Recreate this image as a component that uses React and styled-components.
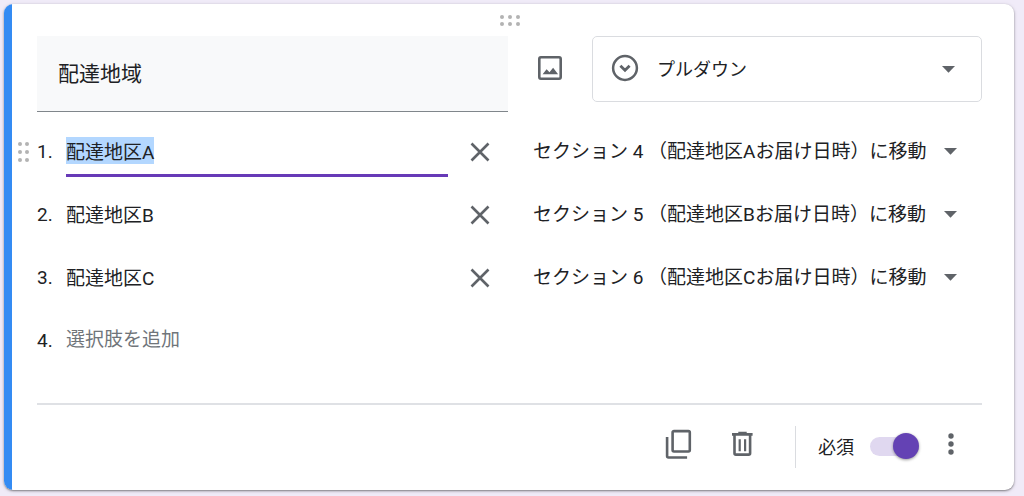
import React, { useEffect, useRef } from "react";
import styled, { createGlobalStyle } from "styled-components";

const GlobalStyle = createGlobalStyle`
  *, *::before, *::after { box-sizing: border-box; }
  body {
    margin: 0;
    background: #f0ebf8;
    color: #202124;
    font-family: Roboto, "Noto Sans CJK JP", sans-serif;
    font-size: 19px;
  }
  button, input, select { font: inherit; color: inherit; }
`;

const Page = styled.main`
  padding: 4px 10px 6px 4px;
`;

const Card = styled.form`
  display: flex;
  overflow: hidden;
  background: #fff;
  border-radius: 9px;
  box-shadow: 0 1px 2px rgba(0, 0, 0, 0.4), 0 1px 4px rgba(0, 0, 0, 0.14);
`;

const Accent = styled.div`
  flex: none;
  width: 8px;
  background: #348bf3;
`;

const Content = styled.div`
  flex: 1;
  min-width: 0;
  padding-right: 32px;
`;

const TopHandle = styled.div`
  display: flex;
  align-items: center;
  justify-content: center;
  height: 32px;
  padding-left: 25px;
`;

const Header = styled.div`
  display: grid;
  grid-template-columns: 471fr 84px 390fr;
  align-items: start;
  padding-left: 25px;
`;

const TitleInput = styled.input`
  width: 100%;
  height: 76px;
  padding: 0 21px 4px;
  border: 0;
  border-bottom: 1px solid #80868b;
  border-radius: 0;
  outline: 0;
  background: #f8f9fa;
  font-size: 21px;
`;

const IconButton = styled.button`
  display: flex;
  align-items: center;
  justify-content: center;
  width: ${(p) => p.$width || 64}px;
  height: ${(p) => p.$height || 48}px;
  padding: 0;
  border: 0;
  background: none;
  color: #5f6368;
`;

const SelectBox = styled.div`
  display: grid;
  align-items: center;
  min-width: 0;
  height: ${(p) => (p.$framed ? 66 : 48)}px;
  border: ${(p) => (p.$framed ? "1px solid #dadce0" : "0")};
  border-radius: 5px;
  color: #5f6368;

  > * { grid-area: 1 / 1; }
  > svg { pointer-events: none; }
`;

const Select = styled.select`
  appearance: none;
  width: 100%;
  height: 100%;
  padding: 0 56px 0 ${(p) => (p.$withIcon ? 64 : 21)}px;
  border: 0;
  outline: 0;
  background: none;
  color: #202124;
  font-size: ${(p) => (p.$withIcon ? 18 : 19)}px;
`;

const LeadIcon = styled.svg`
  margin-left: 16px;
`;

const Caret = styled.svg`
  justify-self: end;
  margin-right: ${(p) => (p.$framed ? 26 : 25)}px;
`;

const Options = styled.ol`
  margin: 8px 0 31px;
  padding: 0;
  list-style: none;
`;

const OptionRow = styled.li`
  display: grid;
  grid-template-columns: 25px 29px 382fr 64px 470fr;
  align-items: center;
  height: 63px;
`;

const RowHandle = styled.span`
  display: flex;
  padding-left: 6px;
`;

const OptionInput = styled.input`
  width: 100%;
  height: 51px;
  padding: ${(p) => (p.$active ? "1px 0 0" : "0 0 2px")};
  border: 0;
  border-bottom: ${(p) => (p.$active ? "3px solid #673ab7" : "0")};
  border-radius: 0;
  outline: 0;
  background: none;

  &::selection { background: #b3d7ff; color: #202124; }
  &::placeholder { color: #70757a; opacity: 1; }
`;

const Footer = styled.footer`
  display: flex;
  align-items: center;
  justify-content: flex-end;
  height: 87px;
  margin-left: 25px;
  padding-bottom: 7px;
  border-top: 2px solid #dfe1e5;
`;

const Separator = styled.span`
  width: 1px;
  height: 42px;
  margin: 6px 22px 0 21px;
  background: #dadce0;
`;

const ToggleLabel = styled.label`
  display: flex;
  align-items: center;
  gap: 16px;
  padding-top: 4px;
  font-size: 18px;
`;

const Toggle = styled.input`
  appearance: none;
  display: grid;
  align-items: center;
  width: 49px;
  height: 26px;
  margin: 0;

  &::before, &::after { content: ""; grid-area: 1 / 1; }
  &::before {
    height: 19px;
    margin-right: 2px;
    border-radius: 10px;
    background: #e0d8f0;
  }
  &::after {
    justify-self: start;
    width: 26px;
    height: 26px;
    border-radius: 50%;
    background: #fff;
    box-shadow: 0 1px 3px rgba(0, 0, 0, 0.4);
  }
  &:checked::after { justify-self: end; background: #6442b4; }
`;

function Dots({ columns, rows, dx, dy }) {
  const dots = [];
  for (let r = 0; r < rows; r++)
    for (let c = 0; c < columns; c++)
      dots.push(<circle key={`${r}-${c}`} cx={2 + c * dx} cy={2 + r * dy} r="2" />);
  const w = 4 + (columns - 1) * dx;
  const h = 4 + (rows - 1) * dy;
  return (
    <svg width={w} height={h} viewBox={`0 0 ${w} ${h}`} fill="#b3b3b3" aria-hidden="true">
      {dots}
    </svg>
  );
}

function DownCaret({ framed }) {
  return (
    <Caret $framed={framed} width="13" height="7" viewBox="0 0 13 7" aria-hidden="true">
      <path d="M0 0h13L6.5 6.7z" fill="currentColor" />
    </Caret>
  );
}

function ImageIcon() {
  return (
    <svg width="32" height="32" viewBox="0 0 32 32" fill="none" aria-hidden="true">
      <rect x="5.3" y="5.3" width="21.4" height="21.4" rx="1.6" stroke="currentColor" strokeWidth="2.6" />
      <path d="M8.6 22.3l4-5.1 2.9 3 3.6-4.5 5 6.6z" fill="currentColor" />
    </svg>
  );
}

function CloseIcon() {
  return (
    <svg width="20" height="20" viewBox="0 0 20 20" aria-hidden="true">
      <path d="M1.5 1.5l17 17M18.5 1.5l-17 17" stroke="currentColor" strokeWidth="2.6" />
    </svg>
  );
}

function CopyIcon() {
  return (
    <svg width="32" height="32" viewBox="0 0 32 32" fill="none" stroke="currentColor" strokeWidth="2.6" aria-hidden="true">
      <rect x="10.6" y="3.1" width="17.2" height="20.4" rx="1.4" />
      <path d="M5.1 9.1v19q0 1.4 1.4 1.4h18.6" />
    </svg>
  );
}

function TrashIcon() {
  return (
    <svg width="32" height="32" viewBox="0 0 32 32" fill="none" stroke="currentColor" aria-hidden="true">
      <path d="M6 6.4h20.6M12.3 5h8.4" strokeWidth="2.6" />
      <path d="M8.5 7v18.2q0 1.4 1.4 1.4h12.8q1.4 0 1.4-1.4V7" strokeWidth="2.6" />
      <path d="M13.7 11.2v12M19.1 11.2v12" strokeWidth="2.2" />
    </svg>
  );
}

function MoreIcon() {
  return (
    <svg width="6" height="22" viewBox="0 0 6 22" fill="currentColor" aria-hidden="true">
      <circle cx="3" cy="3" r="2.7" />
      <circle cx="3" cy="11" r="2.7" />
      <circle cx="3" cy="19" r="2.7" />
    </svg>
  );
}

const options = [
  { name: "配達地区A", target: "セクション 4 （配達地区Aお届け日時）に移動" },
  { name: "配達地区B", target: "セクション 5 （配達地区Bお届け日時）に移動" },
  { name: "配達地区C", target: "セクション 6 （配達地区Cお届け日時）に移動" },
];

export default function App() {
  const activeRef = useRef(null);

  useEffect(() => {
    activeRef.current.focus();
    activeRef.current.select();
  }, []);

  return (
    <>
      <GlobalStyle />
      <Page>
        <Card onSubmit={(e) => e.preventDefault()}>
          <Accent />
          <Content>
            <TopHandle>
              <Dots columns={3} rows={2} dx={8} dy={7} />
            </TopHandle>
            <Header>
              <TitleInput aria-label="質問" defaultValue="配達地域" />
              <IconButton type="button" $width={84} $height={64} aria-label="画像を追加">
                <ImageIcon />
              </IconButton>
              <SelectBox $framed>
                <Select $withIcon aria-label="質問の形式">
                  <option>プルダウン</option>
                </Select>
                <LeadIcon width="32" height="32" viewBox="0 0 32 32" fill="none" stroke="currentColor" aria-hidden="true">
                  <circle cx="16" cy="15" r="11.9" strokeWidth="2.5" />
                  <path d="M11.4 12.8l4.6 4.5 4.6-4.5" strokeWidth="2.8" />
                </LeadIcon>
                <DownCaret framed />
              </SelectBox>
            </Header>
            <Options>
              {options.map((option, i) => (
                <OptionRow key={option.name}>
                  <RowHandle>{i === 0 && <Dots columns={2} rows={3} dx={7} dy={8} />}</RowHandle>
                  <span>{i + 1}.</span>
                  <OptionInput
                    ref={i === 0 ? activeRef : undefined}
                    $active={i === 0}
                    aria-label={`選択肢 ${i + 1}`}
                    defaultValue={option.name}
                  />
                  <IconButton type="button" aria-label="選択肢を削除">
                    <CloseIcon />
                  </IconButton>
                  <SelectBox>
                    <Select aria-label={`選択肢 ${i + 1} の移動先`}>
                      <option>{option.target}</option>
                    </Select>
                    <DownCaret />
                  </SelectBox>
                </OptionRow>
              ))}
              <OptionRow>
                <RowHandle />
                <span>4.</span>
                <OptionInput aria-label="選択肢 4" placeholder="選択肢を追加" />
              </OptionRow>
            </Options>
            <Footer>
              <IconButton type="button" aria-label="コピーを作成">
                <CopyIcon />
              </IconButton>
              <IconButton type="button" aria-label="削除">
                <TrashIcon />
              </IconButton>
              <Separator />
              <ToggleLabel>
                必須
                <Toggle type="checkbox" role="switch" defaultChecked />
              </ToggleLabel>
              <IconButton type="button" $width={63} aria-label="その他のオプション">
                <MoreIcon />
              </IconButton>
            </Footer>
          </Content>
        </Card>
      </Page>
    </>
  );
}
